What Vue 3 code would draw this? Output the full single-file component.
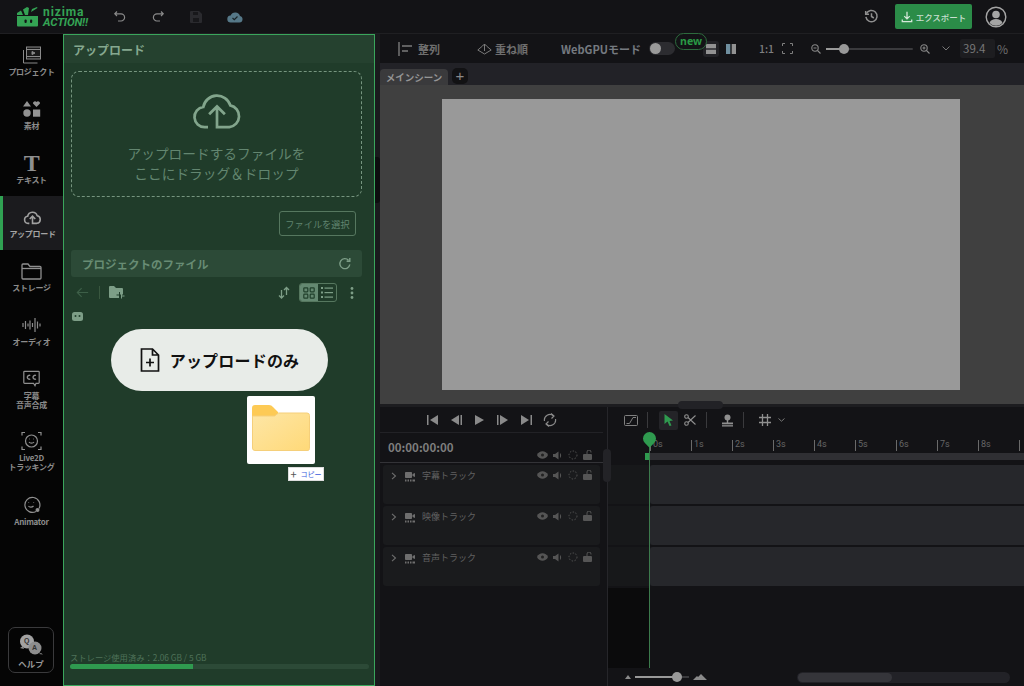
<script setup>
const tracks = ['字幕トラック', '映像トラック', '音声トラック']
const ticks = ['0s', '1s', '2s', '3s', '4s', '5s', '6s', '7s', '8s', '']
</script>

<template>
  <div class="app">
    <header class="topbar">
      <div class="logo">
        <svg width="22" height="20" viewBox="0 0 22 20">
          <path fill="#34a354" d="M0 9h21v9.500a1 1 0 0 1-1 1H1a1 1 0 0 1-1-1z" />
          <path fill="#34a354" d="M0 8V6l4-2.500L6 8zM8 8 6 2.500 10 0l2 1-1 7zM14 5l1-3 5-2 .5 1z" />
          <rect x="7.500" y="12.500" width="2.200" height="3.500" rx="1" fill="#131316" />
          <rect x="13" y="12.500" width="2.200" height="3.500" rx="1" fill="#131316" />
        </svg>
        <div class="logo-text">
          <span class="logo-top">nizima</span>
          <span class="logo-bottom">ACTION!!</span>
        </div>
      </div>
      <div class="history">
        <svg width="14" height="14" viewBox="0 0 14 14" fill="none" stroke="#8a8a8a" stroke-width="1.200">
          <path d="M4 1.500 1.800 3.800 4 6M2 3.800h6a3.600 3.600 0 0 1 0 7.200H5" />
        </svg>
        <svg width="14" height="14" viewBox="0 0 14 14" fill="none" stroke="#8a8a8a" stroke-width="1.200">
          <path d="M10 1.500l2.200 2.300L10 6M12 3.800H6a3.600 3.600 0 0 0 0 7.200h3" />
        </svg>
        <svg width="14" height="14" viewBox="0 0 14 14">
          <path fill="#2a2a2e" d="M2 1h8l3 3v8a1 1 0 0 1-1 1H2a1 1 0 0 1-1-1V2a1 1 0 0 1 1-1z" />
          <rect x="4" y="2" width="5" height="3" fill="#18181b" />
          <rect x="4" y="8" width="6" height="4" fill="#18181b" />
        </svg>
        <svg width="16" height="12" viewBox="0 0 16 12">
          <path fill="#567888" d="M4 11.500a3.500 3.500 0 0 1-.4-7A5 5 0 0 1 13 5a3.300 3.300 0 0 1-.5 6.500z" />
          <path d="M5.500 7 7.300 8.700 10.500 5.500" fill="none" stroke="#1a2428" stroke-width="1.200" />
        </svg>
      </div>
      <div class="top-right">
        <svg width="15" height="15" viewBox="0 0 16 16" fill="none" stroke="#8f8f8f" stroke-width="1.600">
          <path d="M2.500 5A6 6 0 1 1 2 8.500" />
          <path d="M1.800 2v3.500h3.500M8 4.500V8l2.500 1.600" />
        </svg>
        <button class="export">
          <svg width="12" height="12" viewBox="0 0 14 14" fill="none" stroke="#d5e8da" stroke-width="1.500">
            <path d="M7 1v8M3.800 6 7 9.200 10.200 6M1.500 10v2.500h11V10" />
          </svg>
          エクスポート
        </button>
        <svg width="22" height="22" viewBox="0 0 22 22">
          <circle cx="11" cy="11" r="9.800" fill="none" stroke="#a5a5a5" stroke-width="1.400" />
          <circle cx="11" cy="8.500" r="3.800" fill="#a5a5a5" />
          <path fill="#a5a5a5" d="M4.500 17c1-3 3.500-4 6.500-4s5.500 1 6.500 4a9 9 0 0 1-13 0z" />
        </svg>
      </div>
    </header>

    <div class="main">
      <nav class="sidebar">
        <div class="nav-item">
          <svg width="18" height="17" viewBox="0 0 18 17" fill="none" stroke="#8a8a8a">
            <rect x="3.500" y=".5" width="14" height="12" fill="#1a1a1a" />
            <path d="M3.500 3h14M3.500 10h14M.5 3.500v13h14" />
            <path d="M9 5l3 1.500L9 8z" fill="#8a8a8a" />
          </svg>
          <span>プロジェクト</span>
        </div>
        <div class="nav-item">
          <svg width="18" height="17" viewBox="0 0 18 17" fill="#929292">
            <path d="M4 .5 8 6H0zM13.500 6.500 10 3a2 2 0 0 1 3.500-1.500A2 2 0 0 1 17 3z" />
            <circle cx="4" cy="12.500" r="3.700" />
            <rect x="10" y="9" width="7.200" height="7.200" />
          </svg>
          <span>素材</span>
        </div>
        <div class="nav-item">
          <span class="big-t">T</span>
          <span>テキスト</span>
        </div>
        <div class="nav-item active">
          <svg width="19" height="15" viewBox="0 0 24 20" fill="none" stroke="#a0a0a0" stroke-width="2">
            <path d="M8 18H6.500a4.500 4.500 0 0 1-.6-8.960 6.200 6.200 0 0 1 12-.7A4.900 4.900 0 0 1 17.500 18H12V9M8.500 12.500 12 9l3.500 3.500" />
          </svg>
          <span>アップロード</span>
        </div>
        <div class="nav-item">
          <svg width="21" height="18" viewBox="0 0 21 18" fill="none" stroke="#909090" stroke-width="1.300">
            <path d="M1 3a1 1 0 0 1 1-1h5l2 2.500h10a1 1 0 0 1 1 1V16a1 1 0 0 1-1 1H2a1 1 0 0 1-1-1z" />
            <path d="M1 6.500h19" />
          </svg>
          <span>ストレージ</span>
        </div>
        <div class="nav-item">
          <svg width="19" height="14" viewBox="0 0 19 14" stroke="#8a8a8a" stroke-width="1.200">
            <path d="M1 5v4M3.500 3v8M6 5.500v3M8 2.500v9M10.500 5v4M13 0v14M15.500 3.500v7M18 5.500v3" />
          </svg>
          <span>オーディオ</span>
        </div>
        <div class="nav-item tall">
          <svg width="17" height="17" viewBox="0 0 17 17" fill="none" stroke="#8f8f8f" stroke-width="1.200">
            <path d="M1.600.8h13.800a.8.8 0 0 1 .8.8V12a.8.8 0 0 1-.8.8H13l-1 2.400-1.500-2.400H1.600a.8.8 0 0 1-.8-.8V1.600a.8.8 0 0 1 .8-.8z" />
            <path d="M7.300 5a2 2 0 1 0 0 3.500M13 5a2 2 0 1 0 0 3.500" stroke-width="1.400" />
          </svg>
          <span>字幕<br />音声合成</span>
        </div>
        <div class="nav-item tall2">
          <svg width="21" height="19" viewBox="0 0 21 19" fill="none" stroke="#8f8f8f" stroke-width="1.200">
            <path d="M1 4V1h3M17 1h3v3M1 15v3h3M17 18h3v-3" />
            <circle cx="10.500" cy="9.500" r="6" />
            <path d="M8 10.500c1.200 1.600 3.800 1.600 5 0M8.300 7.500h.6M12.200 7.500h.6" />
          </svg>
          <span>Live2D<br />トラッキング</span>
        </div>
        <div class="nav-item">
          <svg width="18" height="17" viewBox="0 0 18 17" fill="none" stroke="#8f8f8f" stroke-width="1.200">
            <path d="M13 15a7.500 7.500 0 1 1 3-3" />
            <path d="M5.500 9.500c1 1.500 3.500 1.500 5 0M5.500 6h.6M10.500 6h.6" />
            <circle cx="14.500" cy="13.500" r="2" fill="#8f8f8f" stroke="none" />
          </svg>
          <span>Animator</span>
        </div>
        <div class="help">
          <svg width="24" height="21" viewBox="0 0 24 21">
            <circle cx="8" cy="7.500" r="7" fill="#a2a2a2" />
            <circle cx="16" cy="14" r="6.500" fill="#8d8d8d" />
            <path d="M1 14 4 12 5 15zM22 19l2 1.500-4-.5z" fill="#8d8d8d" />
          </svg>
          <b class="q">Q</b><b class="a">A</b>
          <span>ヘルプ</span>
        </div>
      </nav>

      <section class="panel">
        <div class="panel-head">アップロード</div>
        <div class="dropzone">
          <svg width="54" height="44" viewBox="0 0 24 19.500" fill="none" stroke="#82a58c" stroke-width="1.200">
            <path d="M8 18.700H6.500a4.500 4.500 0 0 1-.6-8.960 6.200 6.200 0 0 1 12-.7A4.900 4.900 0 0 1 17.500 18.700H12V9.500M8.500 13 12 9.500l3.500 3.500" />
          </svg>
          <p>アップロードするファイルを<br />ここにドラッグ＆ドロップ</p>
        </div>
        <div class="select-row"><button class="select">ファイルを選択</button></div>
        <div class="files-bar">
          <span>プロジェクトのファイル</span>
          <svg width="14" height="14" viewBox="0 0 14 14" fill="none" stroke="#7d9e87" stroke-width="1.400">
            <path d="M11.800 7.500A5 5 0 1 1 10.500 3.200M11.800 1v3.200H8.600" />
          </svg>
        </div>
        <div class="file-tools">
          <svg width="13" height="11" viewBox="0 0 15 12" fill="none" stroke="#3d5f48" stroke-width="1.300">
            <path d="M14 6H2M6.500 1 1.500 6l5 5" />
          </svg>
          <i class="sep"></i>
          <svg width="16" height="13" viewBox="0 0 16 13" fill="#7d9e87">
            <path d="M0 1a1 1 0 0 1 1-1h4l2 2h6a1 1 0 0 1 1 1v5.500h-3V6h-1v2.500H7.500v1H10V12H1a1 1 0 0 1-1-1z" />
            <path d="M12 7.500h1v2h2.500v1H13v2h-1z" />
          </svg>
          <svg class="sort" width="12" height="13" viewBox="0 0 12 13" fill="none" stroke="#7d9e87" stroke-width="1.300">
            <path d="M8.500 9V1.500M6 4l2.500-2.500L11 4M3.500 4v8M1 9.500 3.500 12 6 9.500" />
          </svg>
          <div class="view-toggle">
            <span class="on">
              <svg width="12" height="12" viewBox="0 0 12 12" fill="none" stroke="#21402c" stroke-width="1.200">
                <rect x=".8" y=".8" width="4" height="4" rx=".7" />
                <rect x="7.200" y=".8" width="4" height="4" rx=".7" />
                <rect x=".8" y="7.200" width="4" height="4" rx=".7" />
                <rect x="7.200" y="7.200" width="4" height="4" rx=".7" />
              </svg>
            </span>
            <span>
              <svg width="12" height="11" viewBox="0 0 12 11" fill="#7d9e87">
                <rect x="0" y="0" width="2" height="2" />
                <rect x="3.500" y=".5" width="8.500" height="1.200" />
                <rect x="0" y="4.500" width="2" height="2" />
                <rect x="3.500" y="5" width="8.500" height="1.200" />
                <rect x="0" y="9" width="2" height="2" />
                <rect x="3.500" y="9.500" width="8.500" height="1.200" />
              </svg>
            </span>
          </div>
          <svg width="4" height="12" viewBox="0 0 4 12" fill="#7d9e87">
            <circle cx="2" cy="1.500" r="1.400" />
            <circle cx="2" cy="6" r="1.400" />
            <circle cx="2" cy="10.500" r="1.400" />
          </svg>
        </div>
        <div class="crumb">
          <svg width="11" height="9" viewBox="0 0 11 9">
            <rect width="11" height="9" rx="2.500" fill="#7d9e87" />
            <circle cx="3.500" cy="4" r="1" fill="#21402c" />
            <circle cx="7.500" cy="4" r="1" fill="#21402c" />
          </svg>
        </div>
        <div class="storage">
          <div class="storage-text">ストレージ使用済み：2.06 GB / 5 GB</div>
          <div class="storage-track"><div class="storage-fill"></div></div>
        </div>

        <div class="pill">
          <svg width="20" height="24" viewBox="0 0 20 24" fill="none" stroke="#111" stroke-width="1.700">
            <path d="M1.500 1h11L18.500 7v16h-17zM12.500 1v6h6M10 10.500v8M6 14.500h8" />
          </svg>
          アップロードのみ
        </div>
        <div class="drag-thumb">
          <svg width="58" height="46" viewBox="0 0 58 46">
            <defs>
              <linearGradient id="fold" x1="0" y1="0" x2="1" y2="1">
                <stop offset="0" stop-color="#fde6a6" />
                <stop offset="1" stop-color="#ffd978" />
              </linearGradient>
            </defs>
            <path fill="#fdca55" d="M0 3a3 3 0 0 1 3-3h14a5 5 0 0 1 4 2l5 5v6H0z" />
            <path fill="url(#fold)" stroke="#f5cf7a" d="M.5 12V11h22l4-3H55a2.500 2.500 0 0 1 2.500 2.500v33A2 2 0 0 1 55 45.500H3a2.500 2.500 0 0 1-2.500-2.500z" />
          </svg>
        </div>
        <div class="drag-copy"><span class="plus">+</span><span class="copy-word">コピー</span></div>
      </section>

      <div class="gutter"><i></i></div>

      <div class="workspace">
        <div class="toolbar">
          <span class="tool first">
            <svg width="15" height="14" viewBox="0 0 15 14" stroke="#7b7b7b" stroke-width="1.400">
              <path d="M1 0v14M4 4h10M4 9h6" />
            </svg>
            整列
          </span>
          <span class="tool second">
            <svg width="15" height="12" viewBox="0 0 15 12" fill="none" stroke="#7b7b7b" stroke-width="1">
              <path d="M5.500 3 .8 7l6.700 4 6.700-4L9.500 3M7.500 8V1M5.500 3l2-2 2 2" />
            </svg>
            重ね順
          </span>
          <span class="tool gpu">WebGPUモード</span>
          <span class="gpu-switch"><i></i></span>
          <span class="new">new</span>
          <span class="layout-a">
            <svg width="10" height="10" viewBox="0 0 10 10"><rect width="10" height="4.300" fill="#929292" /><rect y="5.700" width="10" height="4.300" fill="#929292" /></svg>
          </span>
          <svg class="layout-b" width="10" height="10" viewBox="0 0 10 10"><rect width="4.300" height="10" fill="#6f8f9f" /><rect x="5.700" width="4.300" height="10" fill="#929292" /></svg>
          <span class="ratio">1:1</span>
          <svg class="fit" width="11" height="11" viewBox="0 0 11 11" fill="none" stroke="#7f7f7f">
            <path d="M.5 3V.5H3M8 .5h2.500V3M.5 8v2.500H3M8 10.500h2.500V8" />
          </svg>
          <svg class="zoom-out" width="10" height="10" viewBox="0 0 10 10" fill="none" stroke="#888" stroke-width="1.100">
            <circle cx="4" cy="4" r="3.200" />
            <path d="M6.500 6.500 9.500 9.500M2.500 4h3" />
          </svg>
          <div class="zoom-slider"><i></i></div>
          <svg class="zoom-in" width="10" height="10" viewBox="0 0 10 10" fill="none" stroke="#888" stroke-width="1.100">
            <circle cx="4" cy="4" r="3.200" />
            <path d="M6.500 6.500 9.500 9.500M2.500 4h3M4 2.500v3" />
          </svg>
          <svg class="zoom-chev" width="8" height="5" viewBox="0 0 8 5" fill="none" stroke="#777"><path d="M.5.5 4 4 7.500.5" /></svg>
          <span class="zoom-input">39.4</span>
          <span class="percent">%</span>
        </div>
        <div class="tabs">
          <span class="tab">メインシーン</span>
          <span class="tab-add">+</span>
        </div>
        <div class="stage"><div class="canvas"></div></div>

        <div class="timeline">
          <div class="tl-left">
            <div class="transport">
              <svg width="11" height="10" viewBox="0 0 11 10" fill="#8a8a8a"><rect width="1.500" height="10" /><path d="M11 0v10L3 5z" /></svg>
              <svg width="11" height="10" viewBox="0 0 11 10" fill="#8a8a8a"><path d="M8 0v10L0 5z" /><rect x="9.500" width="1.500" height="10" /></svg>
              <svg width="9" height="10" viewBox="0 0 9 10" fill="#8a8a8a"><path d="M0 0v10l9-5z" /></svg>
              <svg width="11" height="10" viewBox="0 0 11 10" fill="#8a8a8a"><rect width="1.500" height="10" /><path d="M3 0v10l8-5z" /></svg>
              <svg width="11" height="10" viewBox="0 0 11 10" fill="#8a8a8a"><path d="M0 0v10l8-5z" /><rect x="9.500" width="1.500" height="10" /></svg>
              <svg class="loop" width="14" height="14" viewBox="0 0 14 14" fill="none" stroke="#8a8a8a" stroke-width="1.200">
                <path d="M1.500 8A5.500 5.500 0 0 1 10.500 2.800M12.500 6A5.500 5.500 0 0 1 3.500 11.200" />
                <path d="M8 .5l3 2.500-2.500 2.500M6 13.500l-3-2.500 2.500-2.500" />
              </svg>
            </div>
            <div class="timecode">
              <span class="code">00:00:00:00</span>
              <div class="track-icons head">
                <svg width="11" height="8" viewBox="0 0 11 8"><path d="M0 4c2-5 9-5 11 0-2 5-9 5-11 0z" fill="#555" /><circle cx="5.500" cy="4" r="1.500" fill="#222" /></svg>
                <svg width="10" height="9" viewBox="0 0 10 9" fill="#555"><path d="M0 3h2L5.500.5v8L2 6H0zM7 2c1.500 1 1.500 4 0 5z" /></svg>
                <svg width="10" height="10" viewBox="0 0 10 10" fill="none" stroke="#555" stroke-dasharray="1.500 1.500"><circle cx="5" cy="5" r="4" /></svg>
                <svg width="9" height="10" viewBox="0 0 9 10" fill="#555"><rect y="4" width="9" height="6" rx="1" /><path d="M4 4V2a2 2 0 0 1 4 0v.5" fill="none" stroke="#555" /></svg>
              </div>
            </div>
            <div class="track" v-for="t in tracks" :key="t">
              <svg width="6" height="8" viewBox="0 0 6 8" fill="none" stroke="#6e6e6e" stroke-width="1.100"><path d="M1 .8 4.500 4 1 7.200" /></svg>
              <svg class="track-cam" width="10" height="10" viewBox="0 0 10 10" fill="#6e6e6e"><rect width="7" height="6" rx=".8" /><path d="M7.500 2 10 1v4L7.500 4zM0 7.500h1.500v2H0zM2.500 7.500H4v2H2.500zM5 7.500h1.500v2H5zM7.500 7.500H10v2H7.500z" /></svg>
              <span class="track-name">{{ t }}</span>
              <div class="track-icons">
                <svg width="11" height="8" viewBox="0 0 11 8"><path d="M0 4c2-5 9-5 11 0-2 5-9 5-11 0z" fill="#555" /><circle cx="5.500" cy="4" r="1.500" fill="#222" /></svg>
                <svg width="10" height="9" viewBox="0 0 10 9" fill="#555"><path d="M0 3h2L5.500.5v8L2 6H0zM7 2c1.500 1 1.500 4 0 5z" /></svg>
                <svg width="10" height="10" viewBox="0 0 10 10" fill="none" stroke="#555" stroke-dasharray="1.500 1.500"><circle cx="5" cy="5" r="4" /></svg>
                <svg width="9" height="10" viewBox="0 0 9 10" fill="#555"><rect y="4" width="9" height="6" rx="1" /><path d="M4 4V2a2 2 0 0 1 4 0v.5" fill="none" stroke="#555" /></svg>
              </div>
            </div>
          </div>

          <div class="tl-split"><i></i></div>

          <div class="tl-right">
            <div class="tl-tools">
              <svg width="14" height="11" viewBox="0 0 14 11" fill="none" stroke="#808080"><rect x=".5" y=".5" width="13" height="10" rx="1" /><path d="M2.500 8.500h3L9 2.500h3" /></svg>
              <i class="tl-sep sep-one"></i>
              <span class="cursor-btn">
                <svg width="9" height="12" viewBox="0 0 9 12" fill="#2f9a4f"><path d="M.5 0 9 6.500 5.500 7 7.500 11.500 5.500 12 3.500 7.500 .5 10z" /></svg>
              </span>
              <svg class="scissors" width="12" height="12" viewBox="0 0 12 12" fill="none" stroke="#8f8f8f" stroke-width="1.100">
                <circle cx="2.500" cy="2.500" r="1.800" /><circle cx="2.500" cy="9.500" r="1.800" />
                <path d="M4 3.500 11.500 10.500M4 8.500 11.500 1.500" />
              </svg>
              <i class="tl-sep sep-two"></i>
              <svg class="pin" width="11" height="13" viewBox="0 0 11 13" fill="#8f8f8f"><circle cx="5.500" cy="3.500" r="3" /><rect x="4.800" y="6" width="1.400" height="3" /><rect y="8.500" width="11" height="1.800" /><rect y="11.200" width="11" height="1.300" /></svg>
              <i class="tl-sep sep-two"></i>
              <svg class="pin" width="12" height="12" viewBox="0 0 12 12" stroke="#8f8f8f" stroke-width="1.300"><path d="M3.500 0v12M8.500 0v12M0 3.500h12M0 8.500h12" /></svg>
              <svg class="grid-chev" width="7" height="4" viewBox="0 0 7 4" fill="none" stroke="#777"><path d="M.5.5 3.500 3.200 6.500.5" /></svg>
            </div>
            <div class="ruler">
              <span class="tick" v-for="(l, i) in ticks" :key="i">{{ l }}</span>
            </div>
            <div class="scene-strip"><i></i></div>
            <div class="lane" v-for="t in tracks" :key="t"><div class="lane-fill"></div></div>
            <div class="lane-empty"></div>
            <div class="tl-foot">
              <svg width="6" height="4" viewBox="0 0 6 4" fill="#8a8a8a"><path d="M3 0l3 4H0z" /></svg>
              <div class="foot-slider"><i></i></div>
              <svg width="14" height="6" viewBox="0 0 14 6" fill="#8a8a8a"><path d="M8 0l6 6H0l4-4 1 1z" /></svg>
              <div class="foot-scroll"><i></i></div>
            </div>
            <div class="playhead"><b></b></div>
          </div>

          <div class="grip"></div>
        </div>
      </div>
    </div>
  </div>
</template>

<style>
html, body {
  margin: 0;
  background: #131316;
}
</style>

<style scoped>
* {
  box-sizing: border-box;
}

.app {
  width: 1024px;
  height: 686px;
  overflow: hidden;
  display: flex;
  flex-direction: column;
  font-family: "Noto Sans CJK JP", "Noto Sans", sans-serif;
  background: #131316;
  color: #8a8a8a;
}

.topbar {
  height: 34px;
  flex: none;
  display: flex;
  align-items: center;
  padding-left: 17px;
  border-bottom: 1px solid #1f1f22;
}

.logo {
  display: flex;
  align-items: center;
  gap: 4px;
  width: 72px;
}

.logo-text {
  display: flex;
  flex-direction: column;
  color: #34a354;
  font-family: "Roboto", sans-serif;
  font-weight: 700;
  line-height: 10px;
}

.logo-top {
  font-size: 12px;
  letter-spacing: .9px;
}

.logo-bottom {
  font-size: 11.500px;
  font-style: italic;
  letter-spacing: -.2px;
}

.history {
  display: flex;
  align-items: center;
  gap: 24px;
  margin-left: 24px;
}

.top-right {
  margin-left: auto;
  display: flex;
  align-items: center;
  gap: 13px;
  padding-right: 17px;
}

.export {
  width: 77px;
  height: 25px;
  margin-left: 3px;
  border: 0;
  border-radius: 2px;
  background: #2b8c48;
  color: #c9dfd0;
  font: 500 8.500px "Noto Sans CJK JP", sans-serif;
  display: flex;
  align-items: center;
  justify-content: center;
  gap: 3px;
  padding: 0;
}

.main {
  flex: 1;
  display: flex;
  min-height: 0;
}

.sidebar {
  width: 63px;
  flex: none;
  background: #050505;
  display: flex;
  flex-direction: column;
  padding-bottom: 13px;
}

.nav-item {
  height: 54px;
  flex: none;
  display: flex;
  flex-direction: column;
  align-items: center;
  padding-top: 11px;
  font-size: 8px;
  font-weight: 700;
  line-height: 9px;
  text-align: center;
  color: #8c8c8c;
  position: relative;
}

.nav-item > svg {
  height: 20px;
  margin-bottom: 2px;
}

.nav-item > span {
  letter-spacing: -.3px;
}

.nav-item.tall {
  height: 62px;
}

.nav-item.tall2 {
  height: 64px;
}

.nav-item.active {
  background: #1b1b1e;
  border-left: 3px solid #30a253;
  padding-right: 1px;
  color: #a5a5a5;
}

.big-t {
  font-family: "Liberation Serif", serif;
  font-size: 24px !important;
  font-weight: 700;
  line-height: 20px;
  height: 20px;
  margin-bottom: 2px;
  color: #8f8f8f;
}

.help {
  margin: auto 0 0 8px;
  width: 46px;
  height: 46px;
  border: 1px solid #3a3a3c;
  border-radius: 7px;
  display: flex;
  flex-direction: column;
  align-items: center;
  padding-top: 6px;
  font-size: 8.500px;
  font-weight: 700;
  line-height: 12px;
  color: #999;
  position: relative;
}

.help svg {
  margin-bottom: 2px;
}

.help b {
  position: absolute;
  font: 700 7px "Liberation Sans", sans-serif;
  color: #333;
}

.help .q {
  left: 15px;
  top: 9px;
}

.help .a {
  left: 23px;
  top: 16px;
}

.panel {
  width: 312px;
  flex: none;
  background: #203c2a;
  border: 1px solid #3aa65c;
  display: flex;
  flex-direction: column;
  position: relative;
}

.panel-head {
  height: 28px;
  flex: none;
  padding: 1px 0 0 9px;
  background: #25412f;
  color: #86a890;
  font-size: 12px;
  font-weight: 700;
  line-height: 28px;
}

.dropzone {
  margin: 8px 12px 0 7px;
  height: 126px;
  flex: none;
  border: 1.500px dashed #76957f;
  border-radius: 8px;
  display: flex;
  flex-direction: column;
  align-items: center;
  padding-top: 13px;
}

.dropzone p {
  margin: 14px 0 0;
  font-size: 13.700px;
  line-height: 20px;
  text-align: center;
  color: #638670;
}

.select-row {
  display: flex;
  justify-content: flex-end;
  padding: 14px 18px 0 0;
}

.select {
  width: 77px;
  height: 25px;
  padding: 0;
  background: transparent;
  border: 1px solid #56775f;
  border-radius: 3px;
  color: #618570;
  font: 400 9.200px "Noto Sans CJK JP", sans-serif;
}

.files-bar {
  margin: 14px 12px 0 7px;
  height: 27px;
  flex: none;
  background: #2c4a37;
  border-radius: 3px;
  display: flex;
  align-items: center;
  justify-content: space-between;
  padding: 0 10px 0 11px;
  color: #688c74;
  font-size: 11.500px;
  font-weight: 700;
}

.file-tools {
  margin: 6px 20px 0 12px;
  height: 19px;
  flex: none;
  display: flex;
  align-items: center;
}

.sep {
  width: 1px;
  height: 13px;
  background: #39573f;
  margin: 0 9px 0 10px;
}

.sort {
  margin-left: auto;
  margin-right: 9px;
}

.view-toggle {
  width: 38px;
  height: 19px;
  border: 1px solid #56775f;
  border-radius: 3px;
  display: flex;
  margin-right: 13px;
  overflow: hidden;
}

.view-toggle span {
  flex: 1;
  display: flex;
  align-items: center;
  justify-content: center;
}

.view-toggle .on {
  background: #648871;
}

.crumb {
  margin: 10px 0 0 8px;
  line-height: 0;
}

.storage {
  margin: auto 5px 16px 6px;
}

.storage-text {
  font-size: 8.300px;
  line-height: 12px;
  color: #4f7259;
}

.storage-track {
  height: 5px;
  margin-top: 1px;
  border-radius: 3px;
  background: #2c4a37;
  overflow: hidden;
}

.storage-fill {
  width: 41%;
  height: 100%;
  background: #2f9a4f;
}

.pill {
  position: absolute;
  left: 47px;
  top: 294px;
  width: 217px;
  height: 62px;
  border-radius: 31px;
  background: #e8ece8;
  color: #111;
  display: flex;
  align-items: center;
  justify-content: center;
  gap: 10px;
  font-size: 16px;
  font-weight: 700;
  letter-spacing: .2px;
}

.drag-thumb {
  position: absolute;
  left: 183px;
  top: 361px;
  width: 68px;
  height: 68px;
  background: #fff;
  border-radius: 2px;
  padding: 9px 0 0 5px;
}

.drag-copy {
  position: absolute;
  left: 224px;
  top: 432px;
  width: 36px;
  height: 14px;
  background: #fff;
  border: 1px solid #ddd;
  display: flex;
  align-items: center;
  justify-content: center;
  gap: 4px;
  line-height: 12px;
  white-space: nowrap;
}

.plus {
  color: #555;
  font-size: 11px;
}

.copy-word {
  color: #3b5bdb;
  font-size: 7px;
}

.gutter {
  width: 5px;
  flex: none;
  background: #1a1a1d;
  position: relative;
}

.gutter i {
  position: absolute;
  left: 0;
  top: 123px;
  width: 5px;
  height: 46px;
  background: #0d0d0f;
  border-radius: 0 3px 3px 0;
}

.workspace {
  flex: 1;
  min-width: 0;
  display: flex;
  flex-direction: column;
}

.toolbar {
  height: 29px;
  flex: none;
  display: flex;
  align-items: center;
  position: relative;
  background: #131316;
  font-size: 11px;
  font-weight: 700;
  color: #6f6f6f;
}

.tool {
  display: flex;
  align-items: center;
  gap: 5px;
}

.first {
  margin-left: 18px;
}

.second {
  margin-left: 37px;
  gap: 3px;
}

.gpu {
  margin-left: 33px;
  color: #757a80;
}

.gpu-switch {
  width: 26px;
  height: 13px;
  margin-left: 8px;
  border-radius: 7px;
  background: #2c2c30;
  padding: 1px;
}

.gpu-switch i {
  display: block;
  width: 11px;
  height: 11px;
  border-radius: 50%;
  background: #9a9a9a;
}

.new {
  position: absolute;
  left: 295px;
  top: -1px;
  width: 32px;
  height: 17px;
  border: 1px solid #2d6a3d;
  border-radius: 9px;
  background: #131316;
  color: #2a9a45;
  font: 700 10.500px/15px "Noto Sans", sans-serif;
  text-align: center;
}

.layout-a {
  margin-left: 28px;
  width: 16px;
  height: 16px;
  background: #222226;
  border-radius: 3px;
  display: flex;
  align-items: center;
  justify-content: center;
}

.layout-b {
  margin-left: 7px;
}

.ratio {
  margin-left: 23px;
  font-size: 10.500px;
  font-weight: 500;
  color: #7f7f7f;
}

.fit {
  margin-left: 8px;
}

.zoom-out {
  margin-left: 18px;
}

.zoom-slider {
  position: relative;
  width: 87px;
  height: 2px;
  margin-left: 5px;
  background: #3a3a3d;
  border-radius: 1px;
}

.zoom-slider::before {
  content: '';
  display: block;
  width: 18px;
  height: 2px;
  background: #999;
}

.zoom-slider i {
  position: absolute;
  left: 13px;
  top: -4px;
  width: 10px;
  height: 10px;
  border-radius: 50%;
  background: #999;
}

.zoom-in {
  margin-left: 7px;
}

.zoom-chev {
  margin-left: 12px;
}

.zoom-input {
  margin-left: 10px;
  width: 35px;
  height: 19px;
  background: #1d1d20;
  border-radius: 2px;
  padding-left: 3px;
  font-size: 11.500px;
  font-weight: 400;
  line-height: 19px;
  color: #777;
}

.percent {
  margin-left: 2px;
  font-size: 12px;
  font-weight: 400;
  color: #6f6f6f;
}

.tabs {
  height: 22px;
  flex: none;
  background: #222227;
  display: flex;
  align-items: flex-end;
  gap: 4px;
}

.tab {
  width: 68px;
  height: 16px;
  background: #3a3a3c;
  border-radius: 4px 4px 0 0;
  font-size: 9.500px;
  font-weight: 700;
  line-height: 17px;
  text-align: center;
  color: #959595;
}

.tab-add {
  width: 16px;
  height: 16px;
  margin-bottom: 1px;
  background: #121214;
  border-radius: 5px;
  font: 400 15px/15px "Liberation Sans", sans-serif;
  text-align: center;
  color: #8a8a8a;
}

.stage {
  height: 319px;
  flex: none;
  background: #404040;
  padding: 14px 0 0 62px;
}

.canvas {
  width: 518px;
  height: 291px;
  background: #999;
}

.timeline {
  flex: 1;
  min-height: 0;
  display: flex;
  position: relative;
  border-top: 3px solid #1d1d20;
  background: #131316;
}

.tl-left {
  width: 223px;
  flex: none;
}

.transport {
  height: 26px;
  display: flex;
  align-items: center;
  padding-left: 47px;
  gap: 13px;
  border-bottom: 1px solid #222226;
}

.loop {
  margin-left: -2px;
}

.timecode {
  height: 30px;
  display: flex;
  position: relative;
  border-bottom: 1px solid #333337;
  padding: 6px 0 0 8px;
}

.code {
  font-size: 11.500px;
  font-weight: 700;
  line-height: 17px;
  color: #7d7d7d;
}

.track-icons {
  position: absolute;
  left: 154px;
  top: 5px;
  display: flex;
  align-items: center;
  gap: 5px;
}

.track-icons.head {
  left: 157px;
  top: auto;
  bottom: 2px;
}

.track {
  height: 39px;
  margin: 2px 3px 2px 3px;
  border-radius: 3px;
  background: #1a1b1d;
  position: relative;
  display: flex;
  align-items: flex-start;
  padding: 7px 0 0 8px;
}

.track + .track {
  margin-top: 2px;
}

.track-cam {
  margin: 0 0 0 8px;
}

.track-name {
  margin: -5px 0 0 7px;
  font-size: 9px;
  line-height: 18px;
  color: #616161;
}

.tl-split {
  width: 5px;
  flex: none;
  position: relative;
  border-right: 1px solid #26262a;
}

.tl-split i {
  position: absolute;
  left: 0;
  top: 42px;
  width: 8px;
  height: 33px;
  border-radius: 4px;
  background: #232327;
  z-index: 1;
}

.tl-right {
  flex: 1;
  min-width: 0;
  position: relative;
  display: flex;
  flex-direction: column;
}

.tl-tools {
  height: 26px;
  flex: none;
  display: flex;
  align-items: center;
  padding-left: 16px;
  gap: 11px;
}

.tl-sep {
  width: 1px;
  height: 16px;
  background: #3a3a3d;
}

.sep-one {
  margin-left: -2px;
}

.sep-two {
  margin-left: -1px;
}

.pin {
  margin-left: 4px;
}

.grid-chev {
  margin-left: -4px;
}

.cursor-btn {
  width: 19px;
  height: 19px;
  border-radius: 2px;
  background: #242428;
  display: flex;
  align-items: center;
  justify-content: center;
}

.scissors {
  margin-left: -5px;
}

.ruler {
  height: 20px;
  flex: none;
  display: flex;
  padding-left: 42px;
}

.tick {
  width: 41px;
  flex: none;
  margin-top: 7px;
  height: 11px;
  border-left: 1px solid #6a6a6a;
  padding-left: 2px;
  font: 400 9px/8px "Roboto", sans-serif;
  color: #666;
}

.scene-strip {
  height: 7px;
  flex: none;
  margin-left: 37px;
  background: #2f2f33;
}

.scene-strip i {
  display: block;
  width: 4px;
  height: 100%;
  background: #2f9a4f;
}

.lane {
  height: 39px;
  flex: none;
  margin-top: 2px;
  background: #17181a;
  padding-left: 42px;
}

.scene-strip + .lane {
  margin-top: 5px;
}

.lane-fill {
  height: 100%;
  background: #26272b;
  border-radius: 3px 0 0 3px;
}

.lane-empty {
  flex: 1;
  min-height: 0;
  margin-top: 2px;
  background: linear-gradient(to right, #0b0b0c 41px, #131316 41px);
}

.tl-foot {
  height: 18px;
  flex: none;
  display: flex;
  align-items: center;
  padding-left: 17px;
  gap: 4px;
}

.foot-slider {
  position: relative;
  width: 54px;
  height: 2px;
  background: #3a3a3d;
}

.foot-slider::before {
  content: '';
  display: block;
  width: 41px;
  height: 2px;
  background: #999;
}

.foot-slider i {
  position: absolute;
  left: 37px;
  top: -4px;
  width: 10px;
  height: 10px;
  border-radius: 50%;
  background: #999;
}

.foot-scroll {
  margin: 0 14px 0 auto;
  width: 213px;
  height: 11px;
  border-radius: 6px;
  background: #222227;
  padding: 1px;
}

.foot-scroll i {
  display: block;
  width: 94px;
  height: 9px;
  border-radius: 5px;
  background: #35353a;
}

.playhead {
  position: absolute;
  left: 41px;
  top: 25px;
  bottom: 18px;
  width: 1px;
  background: #3c7a4c;
}

.playhead b {
  position: absolute;
  left: -6px;
  top: 0;
  width: 13px;
  height: 13px;
  border-radius: 50% 50% 50% 0;
  transform: rotate(-45deg);
  background: #2f9a4f;
}

.grip {
  position: absolute;
  left: 298px;
  top: -6px;
  width: 45px;
  height: 8px;
  border-radius: 4px;
  background: #222226;
}
</style>
